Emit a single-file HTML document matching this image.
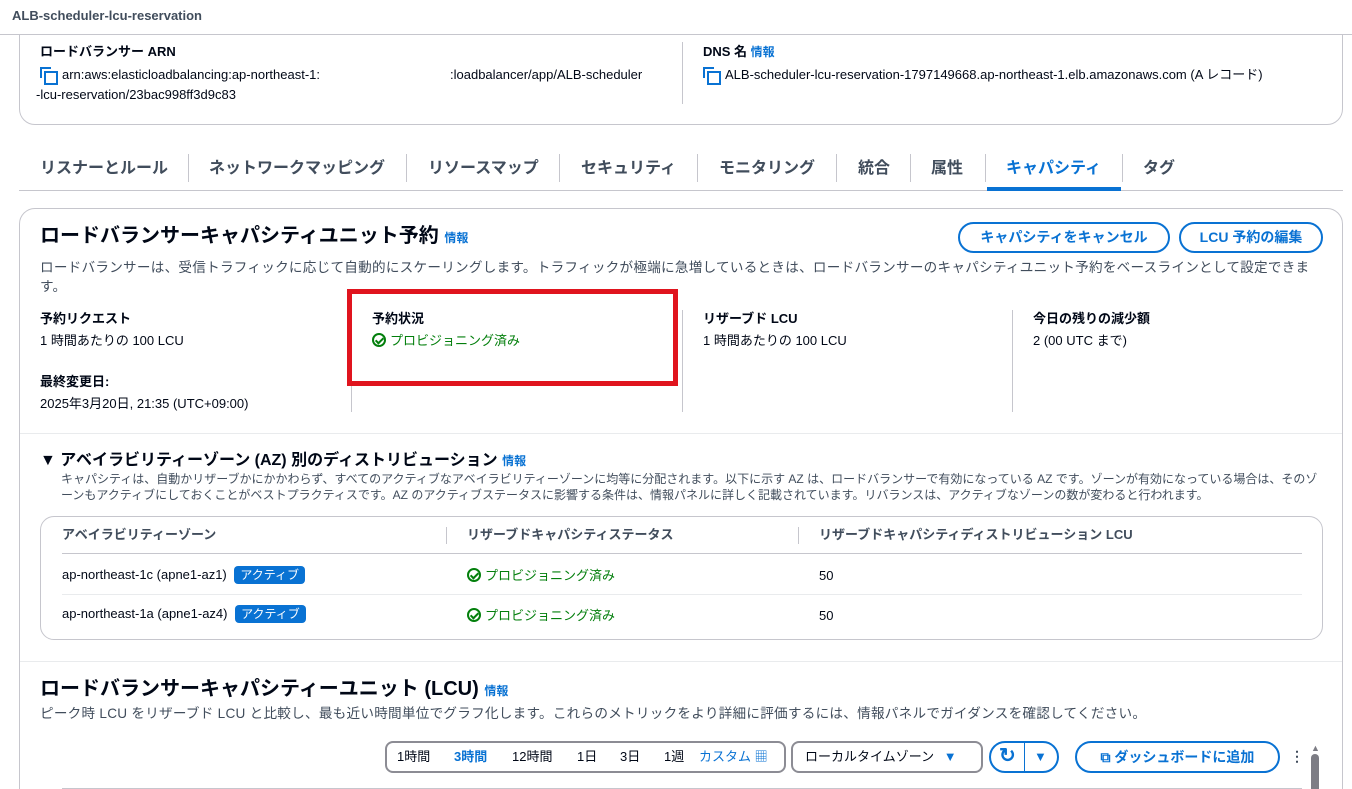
<!DOCTYPE html>
<html><head><meta charset="utf-8">
<style>
*{box-sizing:border-box;margin:0;padding:0}
html,body{width:1352px;height:789px;overflow:hidden}
body{background:#fff;font-family:"Liberation Sans","Noto Sans CJK JP",sans-serif;color:#000716;font-size:14px;position:relative}
.a{position:absolute;white-space:nowrap;line-height:20px}
.b{font-weight:bold}
.blue{color:#0972d3}
.sm{font-size:13px}
.info{font-size:12px;font-weight:bold;color:#0972d3}
.vl{position:absolute;width:1px;background:#c6c6cd}
.btn{position:absolute;border:2px solid #0972d3;border-radius:20px;color:#0972d3;font-weight:bold;font-size:14px;text-align:center}
.badge{display:inline-block;background:#0972d3;color:#fff;font-size:12px;padding:0 6px;line-height:18px;border-radius:4px;margin-left:4px}
.ok{color:#037f0c}
.chk{display:inline-block;width:14px;height:14px;border:2px solid #037f0c;border-radius:50%;vertical-align:-2px;margin-right:4px;position:relative}
.chk:after{content:"";position:absolute;left:2.5px;top:0.5px;width:3px;height:6px;border:solid #037f0c;border-width:0 2px 2px 0;transform:rotate(45deg)}
.copy{display:inline-block;width:14px;height:14px;position:relative;vertical-align:-2px;margin-right:8px}
.copy:before{content:"";position:absolute;left:0;top:0;width:9px;height:9px;border-left:2px solid #0972d3;border-top:2px solid #0972d3}
.copy:after{content:"";position:absolute;left:4px;top:4px;width:10px;height:10px;border:2px solid #0972d3}
.tab{font-size:16px;color:#414d5c;top:159px}
</style></head><body>
<div class="a" style="left:19px;top:-20px;width:1324px;height:145px;border:1px solid #c6c6cd;border-radius:16px"></div>
<div class="a" style="left:0;top:0;width:1352px;height:35px;background:#fff;border-bottom:1px solid #c6c6cd"></div>
<div class="a b sm" style="left:12px;top:6px;color:#414d5c">ALB-scheduler-lcu-reservation</div>

<div class="a b sm" style="left:40px;top:42px">ロードバランサー ARN</div>
<div class="a sm" style="left:40px;top:65px"><span class="copy"></span>arn:aws:elasticloadbalancing:ap-northeast-1:</div>
<div class="a sm" style="left:450px;top:65px">:loadbalancer/app/ALB-scheduler</div>
<div class="a sm" style="left:36px;top:85px">-lcu-reservation/23bac998ff3d9c83</div>
<div class="vl" style="left:682px;top:42px;height:62px"></div>
<div class="a b sm" style="left:703px;top:42px">DNS 名 <span class="info">情報</span></div>
<div class="a sm" style="left:703px;top:65px"><span class="copy"></span>ALB-scheduler-lcu-reservation-1797149668.ap-northeast-1.elb.amazonaws.com (A レコード)</div>

<div class="a b tab" style="left:40px">リスナーとルール</div>
<div class="vl" style="left:188px;top:154px;height:28px"></div>
<div class="a b tab" style="left:209px">ネットワークマッピング</div>
<div class="vl" style="left:406px;top:154px;height:28px"></div>
<div class="a b tab" style="left:428px">リソースマップ</div>
<div class="vl" style="left:559px;top:154px;height:28px"></div>
<div class="a b tab" style="left:581px">セキュリティ</div>
<div class="vl" style="left:697px;top:154px;height:28px"></div>
<div class="a b tab" style="left:719px">モニタリング</div>
<div class="vl" style="left:836px;top:154px;height:28px"></div>
<div class="a b tab" style="left:858px">統合</div>
<div class="vl" style="left:910px;top:154px;height:28px"></div>
<div class="a b tab" style="left:931px">属性</div>
<div class="vl" style="left:985px;top:154px;height:28px"></div>
<div class="a b tab" style="left:1006px;color:#0972d3">キャパシティ</div>
<div class="vl" style="left:1122px;top:154px;height:28px"></div>
<div class="a b tab" style="left:1143px">タグ</div>
<div class="a" style="left:19px;top:190px;width:1324px;height:1px;background:#c6c6cd"></div>
<div class="a" style="left:987px;top:187px;width:134px;height:4px;background:#0972d3"></div>

<div class="a" style="left:19px;top:208px;width:1324px;height:620px;border:1px solid #c6c6cd;border-radius:16px"></div>
<div class="a b" style="left:40px;top:224px;font-size:20px;line-height:24px">ロードバランサーキャパシティユニット予約 <span class="info">情報</span></div>
<div class="btn" style="left:958px;top:222px;width:212px;height:31px;line-height:27px">キャパシティをキャンセル</div>
<div class="btn" style="left:1179px;top:222px;width:144px;height:31px;line-height:27px">LCU 予約の編集</div>
<div class="a" style="left:40px;top:258px;color:#414d5c;white-space:normal;width:1285px;line-height:19px;font-size:13.6px;letter-spacing:0.25px">ロードバランサーは、受信トラフィックに応じて自動的にスケーリングします。トラフィックが極端に急増しているときは、ロードバランサーのキャパシティユニット予約をベースラインとして設定できます。</div>

<div class="a b sm" style="left:40px;top:309px">予約リクエスト</div>
<div class="a sm" style="left:40px;top:331px">1 時間あたりの 100 LCU</div>
<div class="a b sm" style="left:40px;top:372px">最終変更日:</div>
<div class="a sm" style="left:40px;top:394px">2025年3月20日, 21:35 (UTC+09:00)</div>
<div class="vl" style="left:351px;top:310px;height:102px"></div>
<div class="a b sm" style="left:372px;top:309px">予約状況</div>
<div class="a sm ok" style="left:372px;top:331px"><span class="chk"></span>プロビジョニング済み</div>
<div class="a" style="left:347px;top:289px;width:331px;height:97px;border:5px solid #e0141e"></div>
<div class="vl" style="left:682px;top:310px;height:102px"></div>
<div class="a b sm" style="left:703px;top:309px">リザーブド LCU</div>
<div class="a sm" style="left:703px;top:331px">1 時間あたりの 100 LCU</div>
<div class="vl" style="left:1012px;top:310px;height:102px"></div>
<div class="a b sm" style="left:1033px;top:309px">今日の残りの減少額</div>
<div class="a sm" style="left:1033px;top:331px">2 (00 UTC まで)</div>
<div class="a" style="left:20px;top:433px;width:1322px;height:1px;background:#e9ebed"></div>

<div class="a b" style="left:40px;top:451px;font-size:16px">▼ アベイラビリティーゾーン (AZ) 別のディストリビューション <span class="info">情報</span></div>
<div class="a" style="left:61px;top:471px;font-size:12px;color:#414d5c;white-space:normal;width:1265px;line-height:16px">キャパシティは、自動かリザーブかにかかわらず、すべてのアクティブなアベイラビリティーゾーンに均等に分配されます。以下に示す AZ は、ロードバランサーで有効になっている AZ です。ゾーンが有効になっている場合は、そのゾーンもアクティブにしておくことがベストプラクティスです。AZ のアクティブステータスに影響する条件は、情報パネルに詳しく記載されています。リバランスは、アクティブなゾーンの数が変わると行われます。</div>
<div class="a" style="left:40px;top:516px;width:1283px;height:124px;border:1px solid #c6c6cd;border-radius:14px"></div>
<div class="a b sm" style="left:62px;top:525px;color:#414d5c">アベイラビリティーゾーン</div>
<div class="vl" style="left:446px;top:527px;height:17px"></div>
<div class="a b sm" style="left:467px;top:525px;color:#414d5c">リザーブドキャパシティステータス</div>
<div class="vl" style="left:798px;top:527px;height:17px"></div>
<div class="a b sm" style="left:819px;top:525px;color:#414d5c">リザーブドキャパシティディストリビューション LCU</div>
<div class="a" style="left:62px;top:553px;width:1240px;height:1px;background:#c6c6cd"></div>
<div class="a sm" style="left:62px;top:565px">ap-northeast-1c (apne1-az1) <span class="badge">アクティブ</span></div>
<div class="a sm ok" style="left:467px;top:566px"><span class="chk"></span>プロビジョニング済み</div>
<div class="a sm" style="left:819px;top:566px">50</div>
<div class="a" style="left:62px;top:594px;width:1240px;height:1px;background:#e9ebed"></div>
<div class="a sm" style="left:62px;top:604px">ap-northeast-1a (apne1-az4) <span class="badge">アクティブ</span></div>
<div class="a sm ok" style="left:467px;top:606px"><span class="chk"></span>プロビジョニング済み</div>
<div class="a sm" style="left:819px;top:606px">50</div>
<div class="a" style="left:20px;top:661px;width:1322px;height:1px;background:#e9ebed"></div>

<div class="a b" style="left:40px;top:677px;font-size:20px;line-height:24px">ロードバランサーキャパシティーユニット (LCU) <span class="info">情報</span></div>
<div class="a" style="left:40px;top:704px;color:#414d5c;font-size:13.6px;letter-spacing:0.25px">ピーク時 LCU をリザーブド LCU と比較し、最も近い時間単位でグラフ化します。これらのメトリックをより詳細に評価するには、情報パネルでガイダンスを確認してください。</div>

<div class="a" style="left:385px;top:741px;width:401px;height:32px;border:2px solid #8c8c94;border-radius:8px"></div>
<div class="a sm" style="left:397px;top:747px">1時間</div>
<div class="a sm b blue" style="left:454px;top:747px">3時間</div>
<div class="a sm" style="left:512px;top:747px">12時間</div>
<div class="a sm" style="left:577px;top:747px">1日</div>
<div class="a sm" style="left:620px;top:747px">3日</div>
<div class="a sm" style="left:664px;top:747px">1週</div>
<div class="a sm blue" style="left:699px;top:747px">カスタム ▦</div>
<div class="a" style="left:791px;top:741px;width:192px;height:32px;border:2px solid #8c8c94;border-radius:8px"></div>
<div class="a sm" style="left:805px;top:747px">ローカルタイムゾーン <span style="color:#0972d3;margin-left:6px">▼</span></div>
<div class="a" style="left:989px;top:741px;width:70px;height:32px;border:2px solid #0972d3;border-radius:16px"></div>
<div class="vl" style="left:1024px;top:743px;height:28px;background:#0972d3"></div>
<div class="a b blue" style="left:999px;top:746px;font-size:20px">↻</div>
<div class="a blue" style="left:1034px;top:747px;font-size:13px">▼</div>
<div class="btn" style="left:1075px;top:741px;width:205px;height:32px;line-height:28px">⧉ ダッシュボードに追加</div>
<div class="a b" style="left:1290px;top:746px;color:#414d5c">⋮</div>
<div class="a" style="left:1311px;top:754px;width:8px;height:40px;background:#7d7d85;border-radius:4px"></div>
<div class="a" style="left:1311px;top:738px;font-size:9px;color:#7d7d85">▲</div>
<div class="a" style="left:62px;top:788px;width:1240px;height:1px;background:#c6c6cd"></div>
</body></html>
